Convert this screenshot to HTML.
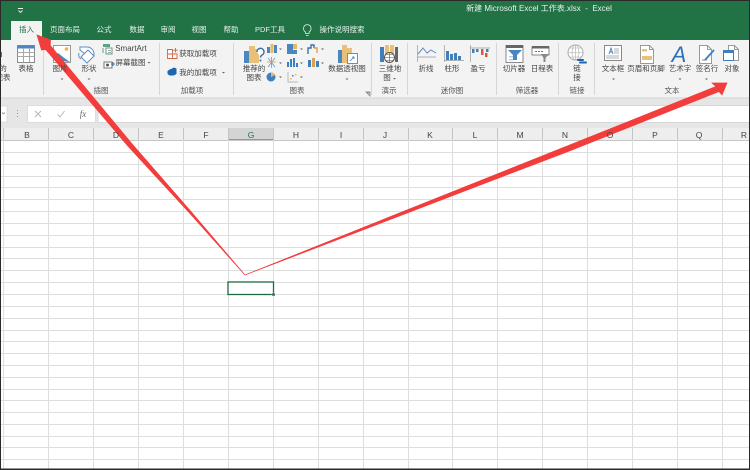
<!DOCTYPE html>
<html lang="zh"><head><meta charset="utf-8">
<style>
html,body{margin:0;padding:0}
#p{position:relative;width:750px;height:470px;overflow:hidden;background:#fff;font-family:"Liberation Sans","Noto Sans CJK SC",sans-serif;color:#444}
#p span{position:absolute;white-space:nowrap;transform:translate(-50%,-50%);font-size:7.5px;line-height:10px}
#p span.l{font-size:7.5px}
#p span.t{color:#e8f1ec;font-size:7.5px}
#p span.g{color:#555;font-size:7.5px}
#p span.h{color:#444;font-size:8.5px}
svg{position:absolute;left:0;top:0}
</style></head><body><div id="p">
<svg width="750" height="470" viewBox="0 0 750 470">
<!-- title / ribbon -->
<rect width="750" height="40" fill="#217346"/>
<rect y="40" width="750" height="58" fill="#f3f3f3"/>
<rect y="98" width="750" height="25" fill="#e6e6e6"/>
<rect y="97.5" width="750" height="1" fill="#d4d4d4"/>
<rect x="11" y="21" width="31" height="20" fill="#f3f3f3"/>
<path d="M18 8.5h5M18.5 10.5l2 2 2-2" stroke="#e8f1ec" fill="none" stroke-width=".9"/>
<!-- lamp -->
<g fill="none" stroke="#e8f1ec" stroke-width=".8"><path d="M305.500 33.500v-1.500c-1.300-.9-2-2.100-2-3.600a3.800 3.800 0 0 1 7.600 0c0 1.500-.7 2.700-2 3.600v1.500zM306 35.500h2.600"/></g>
<!-- group separators -->
<g stroke="#d6d6d6"><path d="M43.500 43v52M159.500 43v52M233.500 43v52M371.500 43v52M407.500 43v52M496.500 43v52M558.500 43v52M594.500 43v52"/></g>
<!-- formula bar -->
<rect x="0" y="106" width="7" height="16" fill="#fff" stroke="#d4d4d4" stroke-width=".7"/>
<rect x="27.500" y="105.500" width="68" height="17" fill="#fff" stroke="#dcdcdc"/>
<rect x="98" y="105.500" width="653" height="17" fill="#fff" stroke="#d8d8d8"/>
<path d="M2 112.500l1.500 1.500 1.500-1.500" stroke="#777" fill="none" stroke-width=".7"/>
<g fill="#999"><rect x="17" y="110" width="1" height="1"/><rect x="17" y="113" width="1" height="1"/><rect x="17" y="116" width="1" height="1"/></g>
<path d="M35 111l6 6M41 111l-6 6" stroke="#b8b8b8"/>
<path d="M57.500 114.500l2.500 2.500 4.500-6" stroke="#b8b8b8" fill="none"/>
<!-- sheet header -->
<rect y="123" width="750" height="5" fill="#e6e6e6"/>
<rect y="128" width="750" height="12.500" fill="#eeeeee"/>
<rect x="228" y="128" width="45.500" height="12.500" fill="#d4d4d4"/>
<rect x="228" y="139.500" width="45.500" height="1.500" fill="#217346"/>
<rect y="140" width="750" height="1" fill="#c6c6c6"/>
<!-- grid rows -->
<g stroke="#dedede" stroke-width="1">
<path d="M0 152.500h750M0 164.500h750M0 176.500h750M0 187.500h750M0 199.500h750M0 211.500h750M0 223.500h750M0 235.500h750M0 247.500h750M0 258.500h750M0 270.500h750M0 282.500h750M0 294.500h750M0 306.500h750M0 318.500h750M0 330.500h750M0 341.500h750M0 353.500h750M0 365.500h750M0 377.500h750M0 389.500h750M0 400.500h750M0 412.500h750M0 424.500h750M0 436.500h750M0 447.500h750M0 459.500h750"/>
<path d="M3.500 128v342M48.500 128v342M93.500 128v342M138.500 128v342M183.500 128v342M228.500 128v342M273.500 128v342M318.500 128v342M363.500 128v342M408.500 128v342M452.500 128v342M497.500 128v342M542.500 128v342M587.500 128v342M632.500 128v342M677.500 128v342M722.500 128v342"/>
</g>
<g stroke="#c4c4c4"><path d="M3.500 128v12M48.500 128v12M93.500 128v12M138.500 128v12M183.500 128v12M228.500 128v12M273.500 128v12M318.500 128v12M363.500 128v12M408.500 128v12M452.500 128v12M497.500 128v12M542.500 128v12M587.500 128v12M632.500 128v12M677.500 128v12M722.500 128v12"/></g>
<!-- selected cell -->
<rect x="228" y="282" width="45.500" height="12.500" fill="#fff" stroke="#1f6b41" stroke-width="1.300"/>
<rect x="272" y="293" width="3" height="3" fill="#1f6b41" stroke="#fff" stroke-width=".4"/>

<!-- ICONS -->
<!-- left clipped -->
<rect x="0" y="52" width="2" height="5" fill="#3f7fbd"/>
<!-- table -->
<rect x="17.500" y="45.500" width="17" height="17" fill="#fff" stroke="#8a8a8a"/>
<rect x="17.500" y="45.500" width="17" height="3" fill="#4a86c0"/>
<path d="M17.500 52.500h17M17.500 56.500h17M23.500 48v14M29.500 48v14" stroke="#a8a8a8" fill="none"/>
<!-- picture -->
<rect x="53.500" y="45.500" width="17" height="17" fill="#fff" stroke="#9a9a9a"/>
<circle cx="66.500" cy="49" r="1.800" fill="#efb14a"/>
<path d="M54 60l4-7 5 4 7 5z" fill="#4a86c0"/>
<!-- shapes -->
<path d="M80 47h7a7 7 0 0 1 7 7v2h-6l-8-6z" fill="#fff" stroke="#5d8fbe"/>
<path d="M79 53a5 5 0 0 0 2 6" fill="none" stroke="#5d8fbe"/>
<path d="M88 50l6 6-7 7-6-6z" fill="#fff" stroke="#5d8fbe"/>
<!-- smartart -->
<path d="M103 44h7v3h-7z" fill="#5aa585"/><rect x="106" y="48" width="6" height="6" fill="#fff" stroke="#888"/><path d="M108 50.500h3M108 52.500h3" stroke="#5aa585" stroke-width=".8"/><path d="M103 48v5" stroke="#5aa585"/>
<!-- screenshot -->
<rect x="104" y="62" width="8" height="6" fill="#fff" stroke="#777"/><circle cx="107.500" cy="65" r="1.500" fill="#555"/><path d="M113 62v4M111 64h4" stroke="#3f7fbd"/>
<!-- addins -->
<path d="M167.500 49.500h5v4.500h-5zM167.500 54h5v4.500h-5zM172.500 54h4.500v4.500h-4.500z" fill="#fff" stroke="#d2683f" stroke-width=".9"/><path d="M175.500 48v4.500M173.200 50.200h4.600" stroke="#d2683f" stroke-width=".9"/>
<path d="M171 69l3-1.500 2.500 1v2.500 3l-3 1.500h-4l-2-1.500v-3l2-1.500z" fill="#1f66b0"/>
<!-- recommended chart -->
<rect x="244" y="51" width="5" height="12" fill="#4a86c0"/><rect x="249" y="46" width="6" height="17" fill="#e8c078"/><rect x="255" y="49" width="4" height="14" fill="#e8c078"/>
<path d="M257 52a3.500 3.500 0 1 1 5 3c-1 .6-1.500 1.200-1.500 2.500" fill="#fff" stroke="#3f6fa8" stroke-width="1.500"/><circle cx="260.500" cy="60.500" r="1" fill="#3f6fa8"/>
<!-- small chart buttons -->
<g>
<rect x="267" y="47" width="3" height="6" fill="#4a86c0"/><rect x="270.500" y="44" width="3" height="9" fill="#e8b868"/><rect x="274" y="45" width="3" height="8" fill="#4a86c0"/>
<rect x="287" y="44" width="6" height="10" fill="#4a86c0"/><rect x="293" y="44" width="4" height="5" fill="#e8b868"/><rect x="293" y="50" width="4" height="4" fill="#4a86c0"/>
<path d="M308 54v-6h3v-3h3v3" fill="none" stroke="#3f6fa8" stroke-width="1.400"/><path d="M314 48h3v5" fill="none" stroke="#d8a050" stroke-width="1.400"/>
<path d="M268 58l7 9M275 58l-7 9M271.500 57v11" stroke="#6f97c4" stroke-width=".8" fill="none"/><path d="M267 62h9" stroke="#d8a050" stroke-width=".8"/>
<rect x="287" y="62" width="2" height="5" fill="#3f7fbd"/><rect x="290" y="59" width="2" height="8" fill="#3f7fbd"/><rect x="293" y="58" width="2" height="9" fill="#3f7fbd"/><rect x="296" y="63" width="2" height="4" fill="#3f7fbd"/>
<rect x="308" y="60" width="3" height="7" fill="#3f7fbd"/><rect x="312" y="58" width="3" height="9" fill="#d8a050"/><rect x="316" y="61" width="3" height="6" fill="#3f7fbd"/>
<circle cx="271" cy="77" r="4.500" fill="#3f7fbd"/><path d="M271 77v-4.500a4.500 4.500 0 0 1 4 2.500z" fill="#e8b868"/>
<path d="M288 72v10h10" fill="none" stroke="#b8b8b8"/><g fill="#e8b868"><rect x="290" y="78" width="1.500" height="1.500"/><rect x="295" y="74" width="1.500" height="1.500"/></g><g fill="#3f7fbd"><rect x="292" y="75" width="1.500" height="1.500"/></g>
</g>
<g fill="#666"><path d="M279 48.500h3l-1.500 1.500zM300 48.500h3l-1.500 1.500zM321 48.500h3l-1.500 1.500zM279 62.500h3l-1.500 1.500zM300 62.500h3l-1.500 1.500zM321 62.500h3l-1.500 1.500zM279 76.500h3l-1.500 1.500zM300 76.500h3l-1.500 1.500z"/></g>
<!-- pivot chart -->
<rect x="338" y="50" width="4" height="13" fill="#4a86c0"/><rect x="342" y="45" width="5" height="18" fill="#e8c078"/><rect x="347" y="48" width="5" height="15" fill="#e8c078"/>
<rect x="347.500" y="53.500" width="10" height="10" fill="#fff" stroke="#888"/><path d="M350 61l4-4M352 57h2v2" stroke="#3f7fbd" fill="none" stroke-width=".8"/>
<path d="M366 92h4v4zM367 93h3v3" fill="none" stroke="#777" stroke-width=".7"/>
<!-- 3D map -->
<rect x="380" y="47" width="4" height="15" fill="#3f7fbd"/><rect x="385" y="45" width="4" height="15" fill="#e8c078"/><rect x="390" y="45" width="4" height="15" fill="#e8c078"/><rect x="395" y="47" width="3" height="15" fill="#666"/>
<circle cx="389.500" cy="57.500" r="5" fill="#fff" stroke="#555"/><path d="M384.500 57.500h10M389.500 52.500v10M386 54.500h7M386 60.500h7" stroke="#555" stroke-width=".6"/>
<!-- sparklines -->
<path d="M417.500 45v17M417 57h19" stroke="#999" fill="none" stroke-width=".7"/><path d="M418 54l5-6 4 5 4-3 5 3" fill="none" stroke="#5d8fbe" stroke-width="1"/>
<path d="M444.500 45v17M444 60.500h20" stroke="#999" fill="none" stroke-width=".7"/><g fill="#3f7fbd"><rect x="446" y="51" width="3" height="9"/><rect x="450" y="54" width="3" height="6"/><rect x="454" y="53" width="3" height="7"/><rect x="458" y="56" width="3" height="4"/></g>
<path d="M470.500 45v17M470 48h20" stroke="#999" fill="none" stroke-width=".7"/><g fill="#3f7fbd"><rect x="472" y="49" width="2.500" height="4"/><rect x="476" y="49" width="2.500" height="3"/><rect x="486" y="49" width="2.500" height="3"/></g><g fill="#d8583c"><rect x="481" y="49" width="2.500" height="6"/><rect x="485" y="53" width="2.500" height="4"/></g>
<!-- slicer -->
<rect x="506" y="45.500" width="17" height="17" fill="#fff" stroke="#888"/><rect x="506" y="45" width="17" height="3" fill="#666"/><path d="M508 50h14l-5 5v5h-4v-5z" fill="#4a86c0"/><rect x="509" y="56" width="4" height="1.500" fill="#b8cfe6"/><rect x="509" y="59" width="4" height="1.500" fill="#b8cfe6"/>
<!-- timeline -->
<rect x="532" y="47" width="17" height="8" fill="#fff" stroke="#888"/><rect x="532" y="46" width="17" height="2.500" fill="#666"/><path d="M535 51.500h8" stroke="#3f7fbd" stroke-dasharray="2 1"/><path d="M541 54h8l-3.500 4v4h-2v-4z" fill="#888"/>
<!-- link -->
<circle cx="575.500" cy="52.500" r="7.500" fill="#fff" stroke="#aaa"/><path d="M568 52.500h15M575.500 45v15M570 48h11M570 57h11" stroke="#aaa" stroke-width=".6"/><ellipse cx="575.500" cy="52.500" rx="3.500" ry="7.500" fill="none" stroke="#aaa" stroke-width=".6"/>
<path d="M578 60h5M580 62.500h6" stroke="#1f66b0" stroke-width="2" stroke-linecap="round" fill="none"/>
<!-- textbox -->
<rect x="604.500" y="45.500" width="17" height="15" fill="#fff" stroke="#888"/><path d="M609 54l2-6 2 6M609.500 52h3" stroke="#3f7fbd" fill="none" stroke-width=".9"/><path d="M614 49h5M614 51h5M614 53h5M606 56h13M606 58h13" stroke="#999" stroke-width=".7"/>
<!-- header footer -->
<path d="M640.500 45.500h9l4 4v14h-13z" fill="#fff" stroke="#999"/><path d="M649.500 45.500v4h4" fill="none" stroke="#999"/><rect x="642" y="49" width="5" height="2.500" fill="#e8c078"/><rect x="642" y="56" width="10" height="4" fill="#e8c078"/>
<!-- wordart -->
<text x="679" y="62" font-family="Liberation Sans,sans-serif" font-style="italic" font-size="22" fill="#2f73b5" text-anchor="middle">A</text>
<!-- signature -->
<path d="M699.500 45.500h8l4 4v14h-12z" fill="#fff" stroke="#999"/><path d="M707.500 45.500v4h4" fill="none" stroke="#999"/><path d="M702 60h5" stroke="#888"/><path d="M705 60l9-10" stroke="#3f86c8" stroke-width="2"/>
<!-- object -->
<path d="M728.500 45.500h6l4 4v11h-10z" fill="#fff" stroke="#999"/><path d="M734.500 45.500v4h4" fill="none" stroke="#999"/><rect x="723.500" y="50.500" width="10" height="10" fill="#fff" stroke="#3f7fbd"/><rect x="723.500" y="50.500" width="10" height="2.500" fill="#3f7fbd"/>
<!-- dropdown dots -->
<g fill="#666"><path d="M60.500 78.500h3l-1.500 1.500zM87.500 78.500h3l-1.500 1.500zM147.500 62h3l-1.500 1.500zM222 72h3l-1.500 1.500zM345.500 78.500h3l-1.500 1.500zM393 78h3l-1.500 1.500zM612 78.500h3l-1.500 1.500zM678.500 78.500h3l-1.500 1.500zM705 78.500h3l-1.500 1.500z"/></g>

<!-- border -->
<path d="M.5 0v470M749.500 0v470" stroke="#2a2a2a"/>
<rect width="750" height="1" fill="#2a2a2a"/>
<rect y="468.500" width="750" height="1.500" fill="#2a2a2a"/>

<!-- arrows -->
<path d="M37 35L50.500 40 50.300 45.500 131.700 143.500 190.800 211.300 245 275 189.200 212.700 128.300 146.500 45.700 49.500 41.500 50z" fill="#f33c3c" stroke="#f33c3c" stroke-width=".7"/>
<path d="M245 275L399.500 213 566 146.500 716 86.500 712 83 727 83 722 95 719 91.500 568 151.500 400.500 215.500z" fill="#f33c3c" stroke="#f33c3c" stroke-width=".7"/>
</svg>

<span class="t" style="left:539px;top:9px;font-size:8px">新建 Microsoft Excel 工作表.xlsx&nbsp; -&nbsp; Excel</span>
<span style="left:26.500px;top:29.500px;color:#217346">插入</span>
<span class="t" style="left:65px;top:29.500px">页面布局</span>
<span class="t" style="left:104px;top:29.500px">公式</span>
<span class="t" style="left:137px;top:29.500px">数据</span>
<span class="t" style="left:168px;top:29.500px">审阅</span>
<span class="t" style="left:199px;top:29.500px">视图</span>
<span class="t" style="left:231px;top:29.500px">帮助</span>
<span class="t" style="left:270px;top:29.500px">PDF工具</span>
<span class="t" style="left:342px;top:29.500px">操作说明搜索</span>

<span class="l" style="left:3px;top:69px">的</span>
<span class="l" style="left:3px;top:78px">视表</span>
<span class="l" style="left:26px;top:69px">表格</span>
<span class="l" style="left:60px;top:69px">图片</span>
<span class="l" style="left:89px;top:69px">形状</span>
<span class="l" style="left:131px;top:49px;font-size:8px">SmartArt</span>
<span class="l" style="left:130.500px;top:63px">屏幕截图</span>
<span class="l" style="left:198px;top:54px">获取加载项</span>
<span class="l" style="left:198px;top:73px">我的加载项</span>
<span class="l" style="left:254px;top:69px">推荐的</span>
<span class="l" style="left:254px;top:78px">图表</span>
<span class="l" style="left:347px;top:69px">数据透视图</span>
<span class="l" style="left:390px;top:69px">三维地</span>
<span class="l" style="left:387px;top:78px">图</span>
<span class="l" style="left:426px;top:69px">折线</span>
<span class="l" style="left:452px;top:69px">柱形</span>
<span class="l" style="left:478px;top:69px">盈亏</span>
<span class="l" style="left:514px;top:69px">切片器</span>
<span class="l" style="left:542px;top:69px">日程表</span>
<span class="l" style="left:577px;top:69px">链</span>
<span class="l" style="left:577px;top:78px">接</span>
<span class="l" style="left:613px;top:69px">文本框</span>
<span class="l" style="left:646px;top:69px">页眉和页脚</span>
<span class="l" style="left:680px;top:69px">艺术字</span>
<span class="l" style="left:707px;top:69px">签名行</span>
<span class="l" style="left:732px;top:69px">对象</span>

<span class="g" style="left:101px;top:91px">插图</span>
<span class="g" style="left:192px;top:91px">加载项</span>
<span class="g" style="left:297px;top:91px">图表</span>
<span class="g" style="left:389px;top:91px">演示</span>
<span class="g" style="left:452px;top:91px">迷你图</span>
<span class="g" style="left:527px;top:91px">筛选器</span>
<span class="g" style="left:577px;top:91px">链接</span>
<span class="g" style="left:672px;top:91px">文本</span>

<span style="left:83px;top:114px;font-family:'Liberation Serif',serif;font-style:italic;font-size:9px;color:#666">fx</span>

<span class="h" style="left:27px;top:134.500px">B</span>
<span class="h" style="left:71px;top:134.500px">C</span>
<span class="h" style="left:116px;top:134.500px">D</span>
<span class="h" style="left:161px;top:134.500px">E</span>
<span class="h" style="left:206px;top:134.500px">F</span>
<span class="h" style="left:251px;top:134.500px;color:#217346">G</span>
<span class="h" style="left:296px;top:134.500px">H</span>
<span class="h" style="left:341px;top:134.500px">I</span>
<span class="h" style="left:385px;top:134.500px">J</span>
<span class="h" style="left:430px;top:134.500px">K</span>
<span class="h" style="left:475px;top:134.500px">L</span>
<span class="h" style="left:520px;top:134.500px">M</span>
<span class="h" style="left:565px;top:134.500px">N</span>
<span class="h" style="left:610px;top:134.500px">O</span>
<span class="h" style="left:655px;top:134.500px">P</span>
<span class="h" style="left:699px;top:134.500px">Q</span>
<span class="h" style="left:744px;top:134.500px">R</span>
</div></body></html>
